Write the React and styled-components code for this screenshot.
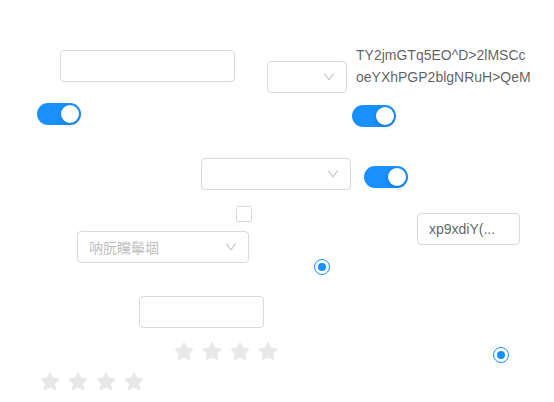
import React from "react";
import styled, { createGlobalStyle } from "styled-components";

const GlobalStyle = createGlobalStyle`
  html, body {
    margin: 0;
    padding: 0;
    background: #fff;
  }
  body {
    font-family: "Liberation Sans", Arial, "Noto Sans CJK SC", sans-serif;
    font-size: 14px;
    color: rgba(0, 0, 0, 0.65);
  }
`;

const Canvas = styled.div`
  position: relative;
  width: 554px;
  height: 402px;
  overflow: hidden;
`;

const Spot = styled.div`
  position: absolute;
  left: ${({ $x }) => $x}px;
  top: ${({ $y }) => $y}px;
`;

const Input = styled.div`
  box-sizing: border-box;
  width: ${({ $w }) => $w}px;
  height: 32px;
  border: 1px solid #d9d9d9;
  border-radius: 4px;
  background: #fff;
  padding: 0 11px;
  display: flex;
  align-items: center;
  font-size: 14px;
  color: rgba(0, 0, 0, 0.65);
  white-space: nowrap;
  overflow: hidden;
`;

const SelectBox = styled(Input)`
  justify-content: space-between;
  padding-right: 11px;
`;

const Placeholder = styled.span`
  color: #bfbfbf;
  font-family: "Liberation Sans", "Noto Sans CJK SC", sans-serif;
`;

const Arrow = styled.svg`
  width: 12px;
  height: 12px;
  fill: rgba(0, 0, 0, 0.25);
  margin-left: auto;
  flex-shrink: 0;
`;

const SwitchTrack = styled.div`
  position: relative;
  width: 44px;
  height: 22px;
  border-radius: 11px;
  background: #1890ff;
`;

const Knob = styled.span`
  position: absolute;
  top: 2px;
  left: 24px;
  width: 18px;
  height: 18px;
  border-radius: 50%;
  background: #fff;
  box-shadow: 0 2px 4px rgba(0, 35, 11, 0.2);
`;

const CheckBox = styled.div`
  box-sizing: border-box;
  width: 16px;
  height: 16px;
  border: 1px solid #d9d9d9;
  border-radius: 2px;
  background: #fff;
`;

const RadioRing = styled.div`
  box-sizing: border-box;
  width: 16px;
  height: 16px;
  border: 1px solid #1890ff;
  border-radius: 50%;
  display: flex;
  align-items: center;
  justify-content: center;
`;

const RadioDot = styled.span`
  width: 8px;
  height: 8px;
  border-radius: 50%;
  background: #1890ff;
`;

const TextBlock = styled.div`
  font-size: 14px;
  line-height: 22px;
  color: rgba(0, 0, 0, 0.65);
`;

const Rate = styled.div`
  display: flex;
  gap: 8px;
`;

const Star = styled.svg`
  width: 20px;
  height: 20px;
  fill: #e8e8e8;
`;

const DownIcon = () => (
  <Arrow viewBox="64 64 896 896">
    <path d="M884 256h-75c-5.1 0-9.9 2.5-12.9 6.6L512 654.2 227.9 262.6c-3-4.1-7.8-6.6-12.9-6.6h-75c-6.5 0-10.3 7.4-6.5 12.7l352.6 486.1c12.8 17.6 39 17.6 51.7 0l352.6-486.1c3.9-5.3.1-12.7-6.4-12.7z" />
  </Arrow>
);

const Switch = () => (
  <SwitchTrack>
    <Knob />
  </SwitchTrack>
);

const Radio = () => (
  <RadioRing>
    <RadioDot />
  </RadioRing>
);

const Stars = () => (
  <Rate>
    {[0, 1, 2, 3].map((i) => (
      <Star key={i} viewBox="64 64 896 896">
        <path d="M908.1 353.1l-253.9-36.9L540.7 86.1c-3.1-6.3-8.2-11.4-14.5-14.5-15.8-7.8-35-1.3-42.9 14.5L369.8 316.2l-253.9 36.9c-7 1-13.4 4.3-18.3 9.3a32.05 32.05 0 00.6 45.3l183.7 179.1-43.4 252.9a31.95 31.95 0 0046.4 33.7L512 754l227.1 119.4c6.2 3.3 13.4 4.4 20.3 3.2 17.4-3 29.1-19.5 26.1-36.9l-43.4-252.9 183.7-179.1c5-4.9 8.3-11.3 9.3-18.3 2.7-17.5-9.5-33.7-27-36.3z" />
      </Star>
    ))}
  </Rate>
);

const App = () => {
  return (
    <>
      <GlobalStyle />
      <Canvas>
        <Spot $x={60} $y={50}>
          <Input $w={175} />
        </Spot>
        <Spot $x={267} $y={61}>
          <SelectBox $w={80}>
            <DownIcon />
          </SelectBox>
        </Spot>
        <Spot $x={356} $y={44}>
          <TextBlock>
            TY2jmGTq5EO^D&gt;2lMSCc
            <br />
            oeYXhPGP2blgNRuH&gt;QeM
          </TextBlock>
        </Spot>
        <Spot $x={37} $y={103}>
          <Switch />
        </Spot>
        <Spot $x={352} $y={105}>
          <Switch />
        </Spot>
        <Spot $x={201} $y={158}>
          <SelectBox $w={150}>
            <DownIcon />
          </SelectBox>
        </Spot>
        <Spot $x={364} $y={166}>
          <Switch />
        </Spot>
        <Spot $x={236} $y={206}>
          <CheckBox />
        </Spot>
        <Spot $x={417} $y={213}>
          <Input $w={103}>xp9xdiY(...</Input>
        </Spot>
        <Spot $x={77} $y={231}>
          <SelectBox $w={172}>
            <Placeholder>呐朊矘鬡堌</Placeholder>
            <DownIcon />
          </SelectBox>
        </Spot>
        <Spot $x={314} $y={259}>
          <Radio />
        </Spot>
        <Spot $x={139} $y={296}>
          <Input $w={125} />
        </Spot>
        <Spot $x={174} $y={342}>
          <Stars />
        </Spot>
        <Spot $x={493} $y={347}>
          <Radio />
        </Spot>
        <Spot $x={40} $y={372}>
          <Stars />
        </Spot>
      </Canvas>
    </>
  );
};

export default App;
